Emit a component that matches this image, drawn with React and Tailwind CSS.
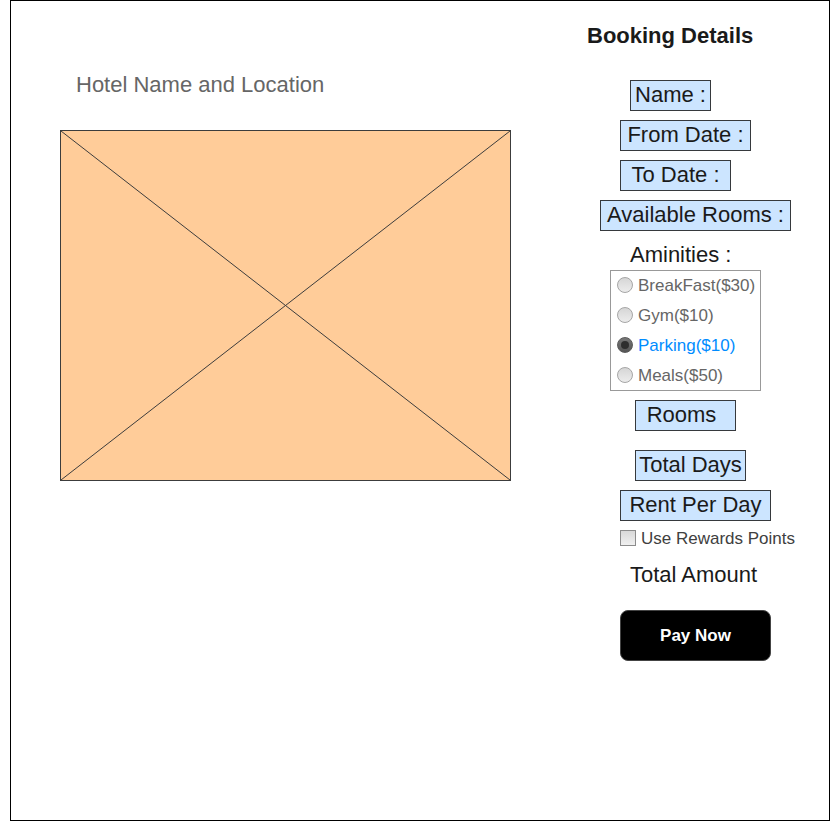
const font = { fontFamily: '"Liberation Sans", Arial, sans-serif' };

const Field = ({ label, className = "" }) => (
  <div
    className={`h-[31px] pb-[1px] flex items-center justify-center border border-[#36393d] bg-[#cce5ff] text-[22px] text-[#1a1a1a] leading-none ${className}`}
  >
    {label}
  </div>
);

const Radio = ({ label, checked }) => (
  <div className="h-[24px] flex items-center gap-[5px]">
    {checked ? (
      <span className="w-[16px] h-[16px] rounded-full border border-[#5a5a5a] bg-gradient-to-b from-[#777] to-[#555] flex items-center justify-center">
        <span className="w-[8px] h-[8px] rounded-full bg-[#2e2e2e]" />
      </span>
    ) : (
      <span className="w-[16px] h-[16px] rounded-full border border-[#a6a6a6] bg-gradient-to-b from-[#d6d6d6] to-[#ececec]" />
    )}
    <span className={`text-[17px] leading-none ${checked ? "text-[#008cff]" : "text-[#666666]"}`}>
      {label}
    </span>
  </div>
);

const amenities = [
  { label: "BreakFast($30)" },
  { label: "Gym($10)" },
  { label: "Parking($10)", checked: true },
  { label: "Meals($50)" },
];

export default function App() {
  return (
    <div className="bg-white min-h-screen" style={font}>
      <div className="ml-[10px] w-[820px] h-[821px] border border-black flex">
        {/* left: hotel picture */}
        <div className="w-[569px] pt-[71px] flex flex-col items-start">
          <div className="ml-[65px] h-[24px] flex items-center text-[22px] text-[#666666]">
            Hotel Name and Location
          </div>
          <div className="ml-[49px] mt-[34px] w-[451px] h-[351px] border border-[#3c3c3c] bg-[#ffcc99]">
            <svg className="w-full h-full block" viewBox="0 0 100 100" preserveAspectRatio="none">
              <line x1="0" y1="0" x2="100" y2="100" stroke="#3c3c3c" strokeWidth="1" vectorEffect="non-scaling-stroke" />
              <line x1="100" y1="0" x2="0" y2="100" stroke="#3c3c3c" strokeWidth="1" vectorEffect="non-scaling-stroke" />
            </svg>
          </div>
        </div>

        {/* right: booking details */}
        <div className="flex-1 flex flex-col items-start">
          <div className="ml-[7px] mt-[22px] h-[24px] flex items-center text-[22px] font-bold text-[#1a1a1a]">
            Booking Details
          </div>
          <Field label="Name :" className="ml-[50px] mt-[33px] w-[81px]" />
          <Field label="From Date :" className="ml-[40px] mt-[9px] w-[131px]" />
          <Field label="To Date :" className="ml-[40px] mt-[9px] w-[111px]" />
          <Field label="Available Rooms :" className="ml-[20px] mt-[9px] w-[191px]" />

          <div className="ml-[50px] mt-[11px] h-[24px] flex items-center text-[22px] text-[#1a1a1a]">
            Aminities :
          </div>
          <div className="ml-[30px] mt-[4px] w-[151px] h-[121px] border border-[#999999] pl-[6px] pt-[2px] flex flex-col gap-[6px]">
            {amenities.map((a) => (
              <Radio key={a.label} label={a.label} checked={a.checked} />
            ))}
          </div>

          <Field label="Rooms" className="ml-[55px] mt-[9px] w-[101px] pr-2" />
          <Field label="Total Days" className="ml-[55px] mt-[19px] w-[111px]" />
          <Field label="Rent Per Day" className="ml-[40px] mt-[9px] w-[151px]" />

          <label className="ml-[40px] mt-[9px] h-[16px] flex items-center gap-[5px]">
            <span className="w-[16px] h-[16px] border border-[#8c8c8c] bg-gradient-to-b from-[#d9d9d9] to-[#f0f0f0]" />
            <span className="text-[17px] leading-none text-[#404040]">Use Rewards Points</span>
          </label>

          <div className="ml-[50px] mt-[16px] h-[24px] flex items-center text-[22px] text-[#1a1a1a]">
            Total Amount
          </div>

          <button className="ml-[40px] mt-[24px] w-[151px] h-[51px] rounded-[8px] bg-black border border-[#444] text-white font-bold text-[17px]">
            Pay Now
          </button>
        </div>
      </div>
    </div>
  );
}
